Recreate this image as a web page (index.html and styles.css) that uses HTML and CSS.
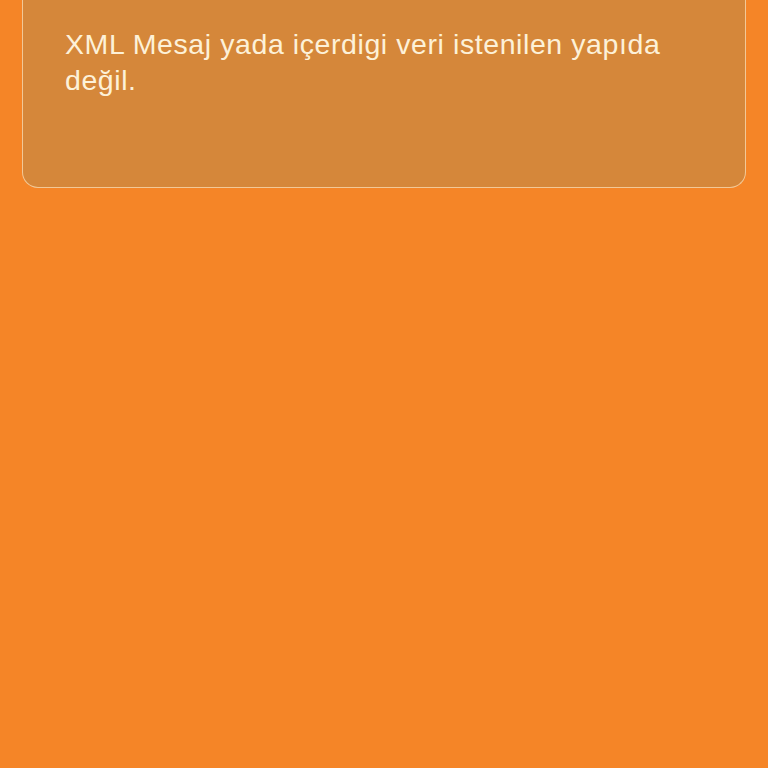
FILE: index.html
```html
<!DOCTYPE html>
<html lang="tr">
<head>
  <meta charset="UTF-8">
  <meta name="viewport" content="width=device-width, initial-scale=1.0">
  <title>Hata</title>
  <link rel="stylesheet" href="styles.css">
</head>
<body>
  <div class="screen">
    <div class="message-box">
      <p class="message-text">XML Mesaj yada içerdigi veri istenilen yapıda değil.</p>
    </div>
  </div>
</body>
</html>
```

FILE: styles.css
```css
:root {
  --background-color: #f58527;
  --box-color: #d5873a;
  --border-color: #f2c896;
  --text-color: #fdf1d8;
}

html, body {
  margin: 0;
  padding: 0;
  height: 100%;
}

body {
  font-family: 'Liberation Sans', Arial, Helvetica, sans-serif;
  background-color: var(--background-color);
}

.screen {
  padding: 0 22px;
}

.message-box {
  box-sizing: border-box;
  height: 188px;
  padding: 26px 60px 0 42px;
  background-color: var(--box-color);
  border: 1.5px solid var(--border-color);
  border-top: none;
  border-radius: 0 0 16px 16px;
}

.message-text {
  margin: 0;
  font-size: 28.5px;
  line-height: 36px;
  letter-spacing: 0.58px;
  color: var(--text-color);
}
```
